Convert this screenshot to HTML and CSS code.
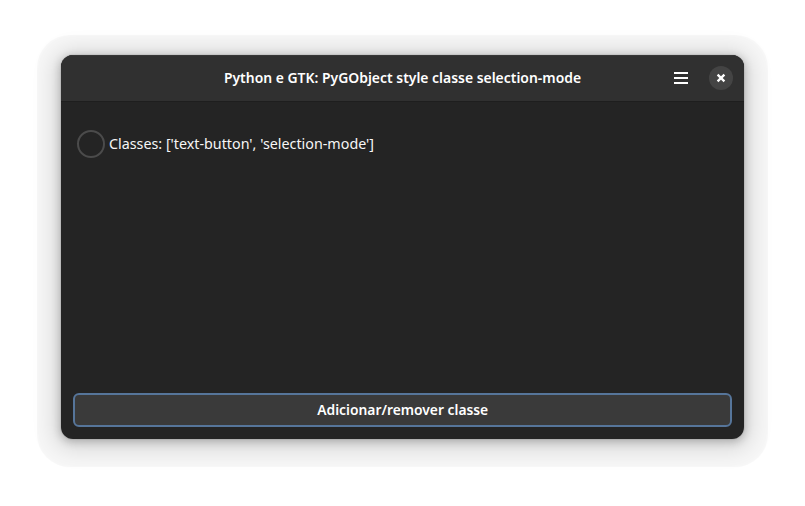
FILE: index.html
```html
<!DOCTYPE html>
<html lang="pt-BR">
<head>
<meta charset="utf-8">
<title>Python e GTK</title>
<link rel="stylesheet" href="styles.css">
</head>
<body>
<main class="window">
  <header class="headerbar">
    <h1 class="title">Python e GTK: PyGObject style classe selection-mode</h1>
    <button class="menu" aria-label="Menu"><svg width="16" height="16" viewBox="0 0 16 16"><path d="M1 2h14v2H1zM1 7h14v2H1zM1 12h14v2H1z" fill="#fff"/></svg></button>
    <button class="close" aria-label="Fechar"><svg width="16" height="16" viewBox="0 0 16 16"><path d="M4.6 4.6l6.8 6.8M11.4 4.6l-6.8 6.8" stroke="#fff" stroke-width="2.3"/></svg></button>
  </header>
  <section class="content">
    <label class="check"><span class="ring"></span><span class="check-text">Classes: ['text-button', 'selection-mode']</span></label>
    <button class="action"><span class="action-text">Adicionar/remover classe</span></button>
  </section>
</main>
</body>
</html>
```
FILE: styles.css
```css
* { box-sizing: border-box; }
body {
  margin: 0;
  height: 506px;
  padding: 55px 61px 67px;
  background: #fff;
  font: 15px/20px "Noto Sans", sans-serif;
  color: #fff;
  overflow: hidden;
}
button { border: 0; padding: 0; color: inherit; font: inherit; }
.window {
  width: 683px;
  height: 384px;
  border-radius: 12px;
  background: #242424;
  overflow: hidden;
  display: flex;
  flex-direction: column;
  box-shadow: 0 0 0 1px rgba(0,0,0,.05), 0 2px 8px 1px rgba(0,0,0,.22), 0 3px 22px 8px rgba(0,0,0,.12), 0 4px 1px 24px rgba(0,0,0,.03);
}
.headerbar {
  height: 46px;
  flex: none;
  background: #303030;
  box-shadow: inset 0 1px #373737, 0 1px #1e1e1e;
  display: grid;
  grid-template-columns: 80px 1fr 34px 46px;
  align-items: center;
}
.title { grid-column: 2; margin: 0; font: 600 15px/20px "Noto Sans", sans-serif; text-align: center; white-space: nowrap; transform: translateY(-1px) scaleX(.928); }
.menu { width: 34px; height: 34px; background: none; display: grid; place-items: center; }
.close { width: 24px; height: 24px; margin-left: 11px; border-radius: 50%; background: #444; display: grid; place-items: center; }
.content { flex: 1; padding: 12px; display: flex; flex-direction: column; justify-content: space-between; }
.check { display: flex; align-items: center; gap: 4px; padding: 17px 4px; }
.ring { width: 28px; height: 28px; border: 2px solid #4b4b4b; border-radius: 50%; }
.check-text { color: #f6f6f6; white-space: nowrap; transform: translateY(-1px) scaleX(.953); transform-origin: left; }
.action { height: 34px; border: 2px solid #56759a; border-radius: 6px; background: #3a3a3a; font-weight: 600; }
.action-text { display: inline-block; transform: translateY(-1px) scaleX(.922); }
```
